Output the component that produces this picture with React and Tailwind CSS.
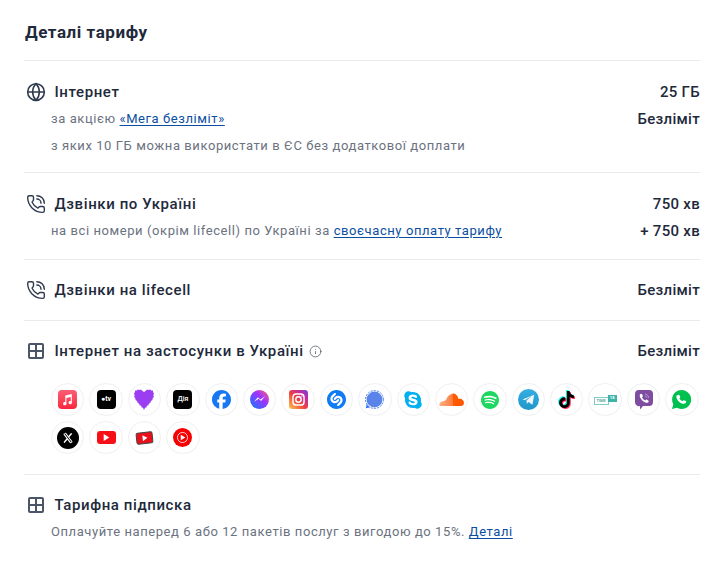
import React from 'react';
import { Globe, PhoneCall, Info } from 'lucide-react';
import { FaSkype } from 'react-icons/fa';
import {
  SiFacebook, SiShazam, SiSpotify, SiTiktok, SiX,
} from 'react-icons/si';

const Tile = ({ className, children }) => (
  <div className={`w-[19px] h-[19px] rounded-[4px] flex items-center justify-center ${className}`}>{children}</div>
);

// square with a cross, corners barely rounded
const GridIcon = () => (
  <svg width="18" height="18" viewBox="0 0 18 18" fill="none" stroke="#4a5568" strokeWidth="2">
    <rect x="2" y="2" width="14" height="14" rx="1" />
    <path d="M9 2v14M2 9h14" />
  </svg>
);

const AppIcons = [
  // apple music
  <Tile key="am" className="bg-gradient-to-b from-[#fb5c74] to-[#fa233b]">
    <svg width="13" height="13" viewBox="0 0 24 24" fill="white">
      <path d="M20 2 8 4.5V17a3 3 0 1 0 2 2.8V9l8-1.7V15a3 3 0 1 0 2 2.8z" />
    </svg>
  </Tile>,
  // apple tv
  <Tile key="atv" className="bg-black">
    <span className="text-white text-[7px] font-bold leading-none">●tv</span>
  </Tile>,
  // heart, jagged edge
  <svg key="heart" width="20" height="21" viewBox="0 0 20 21" fill="#9b3df0">
    <path d="M10 21 8.8 18.5 7.8 18.8 7 16.5 5.8 16.5 5 14.5 3.8 14 3 12 1.6 11 1.2 9 .2 8 .6 6 0 4.5 1 3 1 1.5 3 1.5 4 .5 6 1 7 .5 8.5 2 10 3 11.5 2 13 .5 14 1 16 .5 17 1.5 19 1.5 19 3 20 4.5 19.4 6 19.8 8 18.8 9 18.4 11 17 12 16.2 14 15 14.5 14.2 16.5 13 16.5 12.2 18.8 11.2 18.5z" />
  </svg>,
  // diia
  <Tile key="diia" className="bg-black">
    <span className="text-white text-[7px] font-medium leading-none">Дія</span>
  </Tile>,
  <SiFacebook key="fb" size={19} color="#1877f2" />,
  // messenger
  <svg key="ms" width="19" height="19" viewBox="0 0 24 24">
    <defs>
      <linearGradient id="msg" x1="0" y1="1" x2="1" y2="0">
        <stop offset="0" stopColor="#0a7cff" />
        <stop offset="0.6" stopColor="#a033ff" />
        <stop offset="1" stopColor="#ff6968" />
      </linearGradient>
    </defs>
    <circle cx="12" cy="12" r="12" fill="url(#msg)" />
    <path d="M5 15l5-6 3 3 6-4-5 6-3-3z" fill="white" />
  </svg>,
  // instagram
  <svg key="ig" width="19" height="19" viewBox="0 0 24 24">
    <defs>
      <linearGradient id="igg" x1="0" y1="1" x2="1" y2="0">
        <stop offset="0" stopColor="#fdc94f" />
        <stop offset="0.45" stopColor="#f0413c" />
        <stop offset="0.75" stopColor="#c32aa3" />
        <stop offset="1" stopColor="#6a4ad0" />
      </linearGradient>
    </defs>
    <rect width="24" height="24" rx="4" fill="url(#igg)" />
    <rect x="5" y="5" width="14" height="14" rx="4" fill="none" stroke="white" strokeWidth="1.8" />
    <circle cx="12" cy="12" r="3.4" fill="none" stroke="white" strokeWidth="1.8" />
    <circle cx="16.4" cy="7.6" r="1" fill="white" />
  </svg>,
  <SiShazam key="sh" size={19} color="#0f7bf5" />,
  // signal
  <svg key="sg" width="19" height="19" viewBox="0 0 24 24">
    <circle cx="12" cy="12" r="11.3" fill="none" stroke="#3a76f0" strokeWidth="1.2" strokeDasharray="2.5 1.5" />
    <circle cx="12" cy="12" r="10" fill="#5a84ea" />
    <path d="M1 23l1-5 4 4z" fill="#3a76f0" />
  </svg>,
  <FaSkype key="sk" size={20} color="#00aff0" />,
  // soundcloud
  <svg key="sc" width="25" height="13" viewBox="0 0 25 13">
    <defs>
      <linearGradient id="scg" x1="0" y1="0" x2="1" y2="0">
        <stop offset="0" stopColor="#ffb089" />
        <stop offset="0.55" stopColor="#ff7a3a" />
        <stop offset="0.56" stopColor="#ff5a00" />
        <stop offset="1" stopColor="#ff5500" />
      </linearGradient>
    </defs>
    <path d="M1 13C0 13 0 9 3 8.5 4 8 6 8 7 7 8.500 3 11 1 14 0.500 17 0.500 19 3 19.500 6 22 5 25 7 25 10 25 12 23.500 13 22 13Z" fill="url(#scg)" />
  </svg>,
  <SiSpotify key="sp" size={18} color="#1ed760" />,
  // telegram
  <svg key="tg" width="21" height="21" viewBox="0 0 24 24">
    <defs>
      <linearGradient id="tgg" x1="0.5" y1="0" x2="0.5" y2="1">
        <stop offset="0" stopColor="#37aee2" />
        <stop offset="1" stopColor="#1e96c8" />
      </linearGradient>
    </defs>
    <circle cx="12" cy="12" r="12" fill="url(#tgg)" />
    <path d="M5 12 18.500 6.500 16.500 18l-4.400-3.200-2 2-.4-3.600 6-5.200-7.600 4.600z" fill="#eef6fb" />
  </svg>,
  // tiktok with offset shadows
  <div key="tt" className="relative w-[17px] h-[17px]">
    <SiTiktok size={17} color="#25f4ee" className="absolute -left-[1px] -top-[1px]" />
    <SiTiktok size={17} color="#fe2c55" className="absolute left-[1px] top-[1px]" />
    <SiTiktok size={17} color="#000000" className="absolute left-0 top-0" />
  </div>,
  // time 18
  <div key="tm" className="relative w-[23px] h-[10px]">
    <div className="absolute left-0 bottom-0 w-[15px] h-[8px] border border-[#7fcfc6] flex items-center justify-center">
      <span className="text-[4px] leading-none text-[#5aa9a0] font-bold">TIME</span>
    </div>
    <div className="absolute right-0 top-0 w-[9px] h-[7px] bg-[#3fb3a7] flex items-center justify-center">
      <span className="text-[4px] leading-none text-white font-bold">18</span>
    </div>
  </div>,
  // viber bubble
  <svg key="vb" width="18" height="20" viewBox="0 0 18 20">
    <path d="M4 0h10a4 4 0 0 1 4 4v8a4 4 0 0 1-4 4H8l-3 3.500V16a4 4 0 0 1-5-4V4a4 4 0 0 1 4-4z" fill="#7f4da0" />
    <path d="M5 4.500c1-1 1.800-.8 2.200 0l.6 1.200c.2.500 0 .9-.5 1.300-.3.300-.2.700.2 1.300.7 1 1.500 1.700 2.300 2 .5.200.8 0 1-.3.400-.5.800-.6 1.300-.3l1.100.7c.7.500.7 1.200 0 1.900-1 1-2.700.6-4.500-.7C6.600 10.300 3.800 6.500 5 4.500z" fill="white" />
    <path d="M10 4c2 .2 3.500 1.700 3.700 3.800M10 5.800c1 .2 1.700.9 1.900 1.900" fill="none" stroke="#c9a9dc" strokeWidth=".8" />
  </svg>,
  // whatsapp
  <svg key="wa" width="19" height="19" viewBox="0 0 24 24">
    <path d="M12 0a12 12 0 0 0-10.300 18L0 24l6.200-1.600A12 12 0 1 0 12 0z" fill="#00c050" />
    <path d="M8.500 6c.5 0 .8 0 1 .6l.9 2.200c.1.400 0 .7-.2 1l-.8 1c.9 1.600 2.200 2.800 3.900 3.500l1-1.200c.3-.3.600-.4 1-.2l2.100 1c.5.200.6.500.5 1-.2 1.500-1.500 2.500-3 2.500-4.400-.2-9.100-4.600-9.400-9C5.500 6.900 7 6 8.500 6z" fill="white" />
  </svg>,
  <SiX key="x" size={22} color="white" className="bg-black rounded-full p-[5px]" />,
  // youtube
  <div key="yt" className="w-[19px] h-[13px] rounded-[3px] bg-[#f70f18] flex items-center justify-center">
    <svg width="7" height="7" viewBox="0 0 10 10"><path d="M1 0l8 5-8 5z" fill="white" /></svg>
  </div>,
  // youtube studio-like tilted
  <div key="yk" className="w-[17px] h-[12px] rounded-[2px] bg-[#e8101a] border border-[#444] flex items-center justify-center -rotate-6">
    <svg width="6" height="6" viewBox="0 0 10 10"><path d="M1 0l8 5-8 5z" fill="white" /></svg>
  </div>,
  // youtube music
  <svg key="ym" width="19" height="19" viewBox="0 0 24 24">
    <circle cx="12" cy="12" r="12" fill="#f60002" />
    <circle cx="12" cy="12" r="6.400" fill="none" stroke="white" strokeWidth="1" />
    <path d="M9.800 8.500 15.600 12l-5.800 3.500z" fill="white" />
  </svg>,
];

const Line = ({ children, className = '' }) => (
  <div className={`text-[13px] leading-[20px] tracking-[0.58px] text-[#6b7280] ${className}`}>{children}</div>
);

const A = ({ children }) => (
  <a href="#" className="text-[#0b4ea2] underline underline-offset-2">{children}</a>
);

const RowHead = ({ icon, title, extra, value }) => (
  <div className="flex items-center justify-between h-[24px]">
    <div className="flex items-center">
      <div className="w-[24px] flex justify-center mr-[6.5px] text-[#2f3b4f]">{icon}</div>
      <span className="text-[15px] font-medium tracking-[0.6px] text-[#1e293b]">{title}</span>
      {extra}
    </div>
    <span className="text-[15px] font-medium tracking-[0.3px] text-[#1e293b]">{value}</span>
  </div>
);

export default function App() {
  return (
    <div className="w-[725px] h-[561px] bg-white pl-[24px] pr-[25px] font-['Roboto',sans-serif] overflow-hidden">
      <div className="h-[61px] pt-[20px] border-b border-[#e9eaec]">
        <h2 className="pl-px text-[17px] leading-[24px] font-bold tracking-[0.55px] text-[#1e293b]">Деталі тарифу</h2>
      </div>

      <section className="h-[112px] pt-[19px] border-b border-[#e9eaec]">
        <RowHead icon={<Globe size={20} strokeWidth={1.9} />} title="Інтернет" value="25 ГБ" />
        <div className="flex justify-between pl-[27px] mt-[5px]">
          <Line>за акцією <A>«Мега безліміт»</A></Line>
          <span className="text-[15px] font-medium tracking-[0.3px] leading-[20px] text-[#1e293b]">Безліміт</span>
        </div>
        <Line className="pl-[27px] mt-[7px]">з яких 10 ГБ можна використати в ЄС без додаткової доплати</Line>
      </section>

      <section className="h-[87px] pt-[19px] border-b border-[#e9eaec]">
        <RowHead icon={<PhoneCall size={20} strokeWidth={1.7} />} title="Дзвінки по Україні" value="750 хв" />
        <div className="flex justify-between pl-[27px] mt-[5px]">
          <Line>на всі номери (окрім lifecell) по Україні за <A>своєчасну оплату тарифу</A></Line>
          <span className="text-[15px] font-medium tracking-[0.3px] leading-[20px] text-[#1e293b]">+ 750 хв</span>
        </div>
      </section>

      <section className="h-[61px] pt-[18px] border-b border-[#e9eaec]">
        <RowHead icon={<PhoneCall size={20} strokeWidth={1.7} />} title="Дзвінки на lifecell" value="Безліміт" />
      </section>

      <section className="h-[154px] pt-[18px] border-b border-[#e9eaec]">
        <RowHead
          icon={<GridIcon />}
          title="Інтернет на застосунки в Україні"
          extra={<Info size={13} strokeWidth={1.4} className="ml-[5px] text-[#4b5563]" />}
          value="Безліміт"
        />
        <div className="flex flex-wrap gap-x-[5px] gap-y-[5px] pl-[27px] mt-[20px]">
          {AppIcons.map((icon, i) => (
            <div key={i} className="w-[33.4px] h-[33px] rounded-full border border-[#efefef] flex items-center justify-center">
              {icon}
            </div>
          ))}
        </div>
      </section>

      <section className="pt-[18px]">
        <div className="flex items-center h-[24px]">
          <div className="w-[24px] flex justify-center mr-[6.5px]"><GridIcon /></div>
          <span className="text-[15px] font-medium tracking-[0.6px] text-[#1e293b]">Тарифна підписка</span>
        </div>
        <Line className="pl-[27px] mt-[5px]">Оплачуйте наперед 6 або 12 пакетів послуг з вигодою до 15%. <A>Деталі</A></Line>
      </section>
    </div>
  );
}
